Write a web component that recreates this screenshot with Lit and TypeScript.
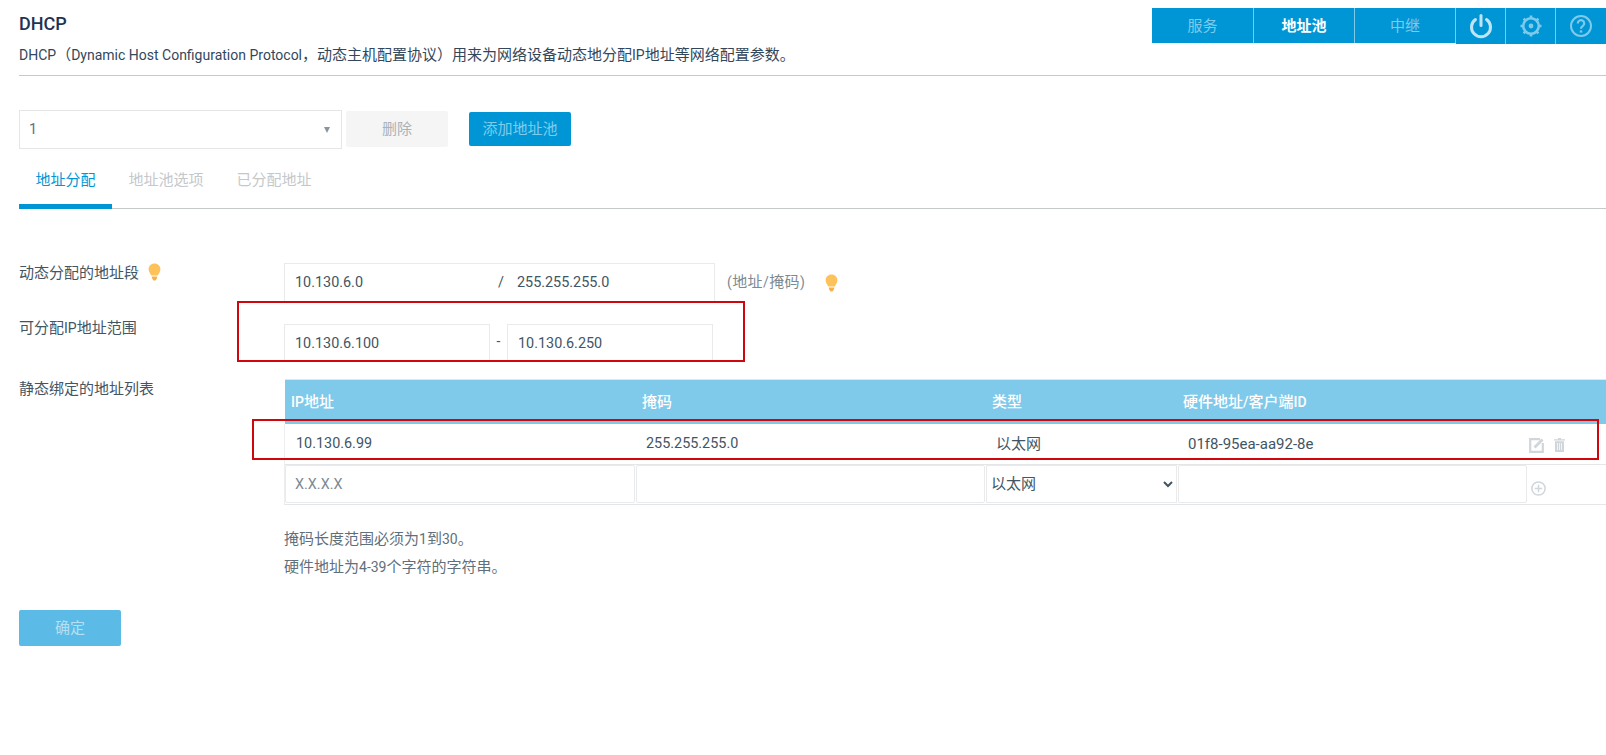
import { LitElement, html, css } from "lit";
import { customElement } from "lit/decorators.js";

const t = (s: string) =>
  s.split(/([\u3000-\u9fff\uff00-\uffef]+)/).map((p, i) => (i % 2 ? html`<span class="c">${p}</span>` : p));

const bulb = html`<svg class="bulb" viewBox="0 0 13 18"><path fill="#fdc35a" d="M6.5 0.5C3 0.5 0.6 3 0.6 6.2c0 2.6 1.6 3.9 2.6 6.3h6.6c1-2.4 2.6-3.7 2.6-6.3C12.4 3 10 .5 6.5.5z"/><path fill="#f4b24a" d="M3.9 13.4h5.2v1.6L7.6 17.4H5.4L3.9 15z"/></svg>`;

@customElement("app-root")
export class AppRoot extends LitElement {
  static styles = css`
    :host {
      display: block;
      position: relative;
      width: 1606px;
      height: 755px;
      overflow: hidden;
      background: #fff;
      color: #425563;
      font: 14px/20px Roboto, "Noto Sans CJK SC", sans-serif;
    }
    .c { font-size: 15px; }
    header {
      display: flex;
      justify-content: space-between;
      height: 76px;
      box-sizing: border-box;
      margin-left: 19px;
      border-bottom: 1px solid #c6c9ca;
    }
    h1 {
      margin: 11px 0 0;
      font-size: 18px;
      line-height: 26px;
      font-weight: 500;
      color: #1d3354;
    }
    .desc {
      margin: 8px 0 0;
      color: #33475b;
    }
    nav {
      display: flex;
      margin-top: 8px;
      height: 36px;
      align-items: flex-start;
    }
    .tab {
      width: 101px;
      height: 35px;
      border-right: 1px solid #7fcaeb;
      box-sizing: border-box;
      background: #0096d6;
      color: #7fcaeb;
      display: flex;
      align-items: center;
      justify-content: center;
    }
    .tab:first-child { width: 102px; }
    .tab.on {
      color: #fff;
      font-weight: 700;
    }
    .ic {
      width: 50px;
      height: 36px;
      box-sizing: border-box;
      border-right: 1px solid #7fcaeb;
      background: #0096d6;
      display: flex;
      align-items: center;
      justify-content: center;
    }
    .ic:last-child { border-right: 0; }
    .controls {
      display: flex;
      align-items: flex-start;
      margin: 34px 0 0 19px;
      height: 39px;
    }
    .sel {
      width: 323px;
      height: 39px;
      box-sizing: border-box;
      border: 1px solid #e4e6e7;
      padding: 1px 9px 0;
      display: flex;
      align-items: center;
      justify-content: space-between;
      color: #5f6f7b;
      font-size: 14.4px;
    }
    .tri {
      width: 0;
      height: 0;
      margin-right: 2px;
      border: 3.5px solid transparent;
      border-top: 6px solid #8a949c;
      border-bottom: 0;
    }
    button {
      font: inherit;
      border: 0;
      padding: 0;
      width: 102px;
      border-radius: 2px;
    }
    .del {
      margin: 1px 0 0 4px;
      height: 36px;
      background: #f5f5f5;
      color: #a9b2b8;
    }
    .add {
      margin: 2px 0 0 21px;
      height: 34px;
      background: #0096d6;
      color: #80cbeb;
    }
    .tabs {
      display: flex;
      margin-left: 19px;
      height: 60px;
      box-sizing: border-box;
      border-bottom: 1px solid #c6c9ca;
      color: #c4c8cb;
    }
    .tabs div {
      padding: 21px 16.5px 0;
    }
    .tabs .active {
      color: #0096d6;
      border-bottom: 5px solid #0096d6;
      margin-bottom: -1px;
    }
    .form {
      display: grid;
      grid-template-columns: 265px 1fr;
      margin: 54px 0 0 19px;
    }
    .label {
      display: flex;
      gap: 9px;
      align-items: flex-start;
    }
    .bulb { width: 13px; height: 18px; flex: none; }
    .field {
      box-sizing: border-box;
      border: 1px solid #e8eaeb;
      height: 38px;
      background: #fff;
      color: #425563;
      font: inherit;
      font-size: 14.4px;
      outline: 0;
      display: block;
    }
    .net {
      display: flex;
      align-items: flex-start;
      height: 61px;
    }
    .pair {
      width: 431px;
      height: 39px;
      box-sizing: border-box;
      border: 1px solid #e8eaeb;
      display: flex;
      align-items: center;
      padding-left: 10px;
      font-size: 14.4px;
    }
    .pair .a { width: 203px; }
    .pair .b { margin-left: 13px; }
    .hint {
      margin: 9px 0 0 12px;
      color: #7c8a94;
      letter-spacing: 0.4px;
    }
    .hint + .bulb { margin: 11px 0 0 20px; }
    .l1 { height: 61px; }
    .range {
      display: flex;
      align-items: flex-start;
      height: 55px;
    }
    .range input {
      width: 206px;
      padding: 0 0 0 10px;
    }
    .dash { width: 17px; text-align: center; line-height: 34px; }
    .l2 { height: 61px; margin-top: -6px; }
    .tbl { margin-left: 1px; }
    .cols {
      display: grid;
      grid-template-columns: 351px 350px 191px 1fr;
    }
    .head {
      height: 45px;
      border-top: 1px solid #e4e6e7;
      box-sizing: border-box;
      background: #7fc9ea;
      color: #fff;
      font-weight: 500;
      align-items: center;
    }
    .head div { padding-left: 6px; }
    .row {
      height: 41px;
      margin-left: -1px;
      border-left: 1px solid #eceeef;
      border-bottom: 1px solid #e4e6e7;
      box-sizing: border-box;
      align-items: center;
      font-size: 14.4px;
    }
    .row > div { padding-left: 10px; }
    .row > div:first-child { padding-left: 11px; }
    .row > div:last-child {
      padding-left: 11px;
      font-size: 15px;
      display: flex;
      justify-content: space-between;
      align-items: center;
    }
    .tools {
      display: flex;
      gap: 10px;
      margin: 3px 41px 0 0;
    }
    .add-row {
      height: 40px;
      margin-left: -1px;
      display: flex;
      gap: 1px;
      border-left: 1px solid #eceeef;
      border-bottom: 1px solid #e4e6e7;
      box-sizing: border-box;
      align-items: flex-start;
    }
    .add-row input.field { border-radius: 2px; padding: 0 9px; }
    .w1 { width: 350px; }
    .w2 { width: 349px; }
    .w3 { width: 349px; }
    .add-row input::placeholder { color: #7c8a94; opacity: 1; }
    .add-row select.field { width: 191px; padding: 0; font-size: 15px; }
    .plus { margin: 16px 0 0 3px; }
    .notes {
      margin: 24px 0 0 284px;
      color: #5f6f7b;
    }
    .notes div { height: 28px; line-height: 20px; }
    .ok {
      display: block;
      margin: 25px 0 0 19px;
      height: 36px;
      background: #5cbae6;
      color: #b5e0f3;
    }
    .mark {
      position: absolute;
      box-sizing: border-box;
      border: 2px solid #d0060d;
      pointer-events: none;
    }
    .m1 { left: 237px; top: 301px; width: 508px; height: 61px; }
    .m2 { left: 252px; top: 419px; width: 1347px; height: 41px; }
  `;

  render() {
    return html`
      <header>
        <div>
          <h1>DHCP</h1>
          <p class="desc">${t("DHCP（Dynamic Host Configuration Protocol，动态主机配置协议）用来为网络设备动态地分配IP地址等网络配置参数。")}</p>
        </div>
        <nav>
          <div class="tab c">服务</div>
          <div class="tab on c">地址池</div>
          <div class="tab c">中继</div>
          <div class="ic">
            <svg width="26" height="26" viewBox="0 0 26 26" fill="none" stroke="#bfe5f5" stroke-width="3" stroke-linecap="round"><path d="M7.5 6.5a9.5 9.5 0 1 0 11 0"/><path d="M13 2.5v10"/></svg>
          </div>
          <div class="ic">
            <svg width="24" height="24" viewBox="0 0 24 24" fill="none" stroke="#7fcaeb"><circle cx="12" cy="12" r="7.8" stroke-width="2.6"/><circle cx="12" cy="12" r="2.4" fill="#7fcaeb" stroke="none"/><path stroke-width="2.6" d="M12 1.5v2.5M12 20v2.5M1.5 12H4M20 12h2.5M4.6 4.6l1.7 1.7M17.7 17.7l1.7 1.7M4.6 19.4l1.7-1.7M17.7 6.3l1.7-1.7"/></svg>
          </div>
          <div class="ic">
            <svg width="24" height="24" viewBox="0 0 24 24" fill="none" stroke="#7fcaeb" stroke-width="2"><circle cx="12" cy="12" r="10"/><path stroke-width="2.2" d="M8.8 9.4a3.2 3.2 0 1 1 4.9 2.7c-1.1.7-1.7 1.3-1.7 2.6"/><path stroke-width="2.4" d="M12 16.4v2.2"/></svg>
          </div>
        </nav>
      </header>

      <div class="controls">
        <div class="sel"><span>1</span><i class="tri"></i></div>
        <button class="del c">删除</button>
        <button class="add c">添加地址池</button>
      </div>

      <div class="tabs c">
        <div class="active">地址分配</div>
        <div>地址池选项</div>
        <div>已分配地址</div>
      </div>

      <div class="form">
        <div class="label l1 c">动态分配的地址段${bulb}</div>
        <div class="net">
          <div class="pair"><span class="a">10.130.6.0</span><span>/</span><span class="b">255.255.255.0</span></div>
          <span class="hint">${t("(地址/掩码)")}</span>
          ${bulb}
        </div>

        <div class="label l2"><span>${t("可分配IP地址范围")}</span></div>
        <div class="range">
          <input class="field" .value=${"10.130.6.100"} />
          <span class="dash">-</span>
          <input class="field" .value=${"10.130.6.250"} />
        </div>

        <div class="label c">静态绑定的地址列表</div>
        <div class="tbl">
          <div class="cols head">
            <div>${t("IP地址")}</div>
            <div class="c">掩码</div>
            <div class="c">类型</div>
            <div>${t("硬件地址/客户端ID")}</div>
          </div>
          <div class="cols row">
            <div>10.130.6.99</div>
            <div>255.255.255.0</div>
            <div class="c">以太网</div>
            <div>
              <span>01f8-95ea-aa92-8e</span>
              <span class="tools">
                <svg width="15" height="15" viewBox="0 0 15 15" fill="none" stroke="#d0d6da" stroke-width="2.2"><path d="M11 1.2H1.2v12.6h12.6V5"/><path d="M5.5 9.5l8-8" stroke-width="2.8"/></svg>
                <svg width="11" height="14" viewBox="0 0 11 14" fill="#d0d6da"><path fill-rule="evenodd" d="M4 0h3v1.2h4v1.3H0V1.2h4zM1 3.2h9V14H1zM3.2 5v7h.7V5zM5.2 5v7h.7V5zM7.2 5v7h.7V5z"/></svg>
              </span>
            </div>
          </div>
          <div class="add-row">
            <input class="field w1" placeholder="X.X.X.X" />
            <input class="field w2" />
            <select class="field"><option>以太网</option></select>
            <input class="field w3" />
            <svg class="plus" width="15" height="15" viewBox="0 0 15 15" fill="none" stroke="#d0d6da" stroke-width="1.5"><circle cx="7.5" cy="7.5" r="6.6"/><path d="M7.5 3.8v7.4M3.8 7.5h7.4"/></svg>
          </div>
        </div>
      </div>

      <div class="notes">
        <div>${t("掩码长度范围必须为1到30。")}</div>
        <div>${t("硬件地址为4-39个字符的字符串。")}</div>
      </div>

      <button class="ok c">确定</button>

      <div class="mark m1"></div>
      <div class="mark m2"></div>
    `;
  }
}
